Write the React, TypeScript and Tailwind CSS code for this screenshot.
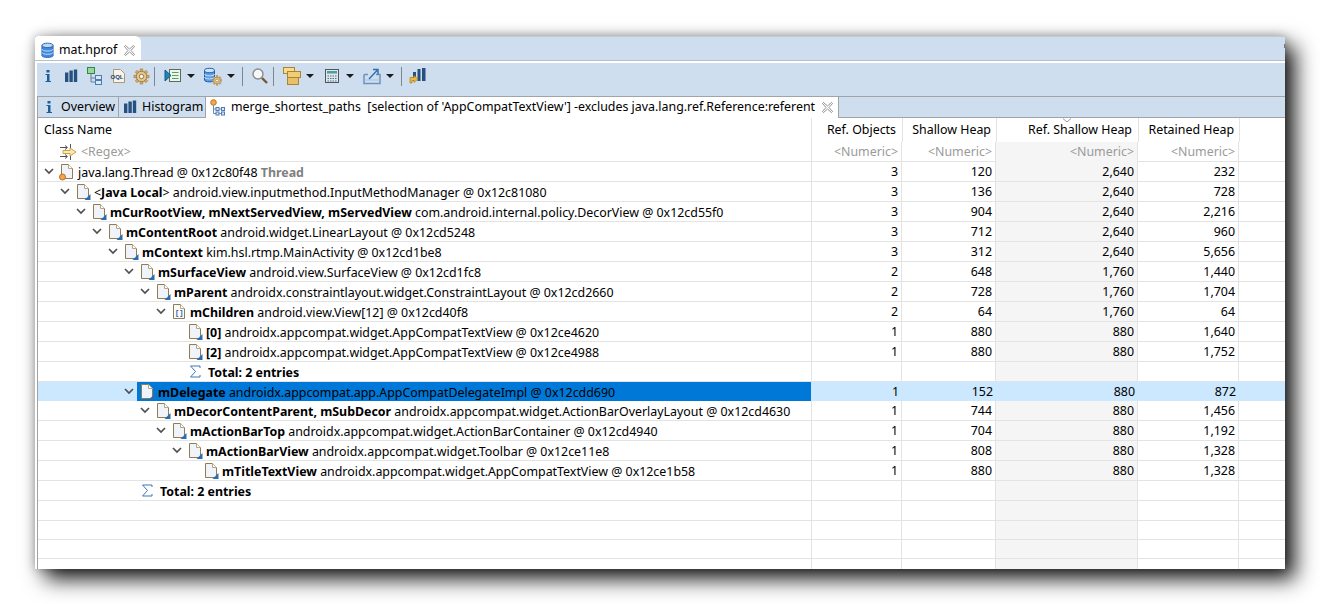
import React from "react";

const F = "font-['Noto_Sans','Liberation_Sans',sans-serif]";

function Chevron() {
  return (
    <svg width="10" height="7" viewBox="0 0 10 7" className="shrink-0">
      <path d="M1 1 L5 5 L9 1" fill="none" stroke="#4f4f4f" strokeWidth="1.7" />
    </svg>
  );
}

function Doc({ kind }: { kind?: "thread" | "array" }) {
  return (
    <svg width="16" height="18" viewBox="0 0 16 18" className="shrink-0">
      <path d="M2.5 1.5 H9.5 L13.5 5.5 V15.5 H2.5 Z" fill={kind === "array" ? "#fbfbfb" : "#f0f4fa"} stroke="#8f7d4f" />
      <path d="M9.5 1.5 V5.5 H13.5" fill="#fff" stroke="#b5a67f" />
      {kind === "thread" ? (
        <circle cx="3.5" cy="14" r="3" fill="#f4a348" stroke="#b8742a" />
      ) : kind === "array" ? (
        <text x="4" y="12" fontSize="7" fill="#2c5f9e" fontFamily="Liberation Mono, monospace" fontWeight="700">[]</text>
      ) : (
        <path d="M15.5 11 V17 H9.5 Z" fill="#2a6db0" />
      )}
    </svg>
  );
}

function Sigma() {
  return (
    <svg width="12" height="13" viewBox="0 0 12 13" className="shrink-0">
      <path d="M11 3 V1 H1.5 L6.5 6.5 L1.5 12 H11 V10" fill="none" stroke="#3a78b8" strokeWidth="1" />
    </svg>
  );
}

function InfoIcon() {
  return (
    <svg width="16" height="16" viewBox="0 0 16 16">
      <rect x="6.5" y="2" width="3" height="2.5" fill="#1f5f99" />
      <path d="M5.5 6 H9.5 V13 H11 V14 H5.5 V13 H7 V7 H5.5 Z" fill="#1f5f99" />
    </svg>
  );
}
function BarsIcon() {
  return (
    <svg width="16" height="16" viewBox="0 0 16 16">
      <rect x="2" y="4.5" width="3.4" height="9.5" fill="#26507f" />
      <rect x="6.4" y="2.5" width="3.4" height="11.5" fill="#26507f" />
      <rect x="10.8" y="1.5" width="3.4" height="12.5" fill="#26507f" />
    </svg>
  );
}
function TreeIcon() {
  return (
    <svg width="18" height="18" viewBox="0 0 18 18">
      <rect x="1.5" y="0.5" width="7" height="6" fill="#9fd49f" stroke="#2f8a4a" />
      <path d="M5 7 V15 H9 M5 11 H9" fill="none" stroke="#6d7f96" />
      <rect x="9.5" y="8.5" width="6" height="4" fill="#dbe8f6" stroke="#4a7db5" />
      <rect x="9.5" y="13.5" width="6" height="4" fill="#dbe8f6" stroke="#4a7db5" />
    </svg>
  );
}
function OqlIcon() {
  return (
    <svg width="16" height="16" viewBox="0 0 16 16">
      <path d="M3.5 1.5 H10.5 L14.5 5.5 V14.5 H3.5 Z" fill="#f7f3e8" stroke="#a99a75" />
      <text x="0.5" y="11" fontSize="6" fontWeight="700" fill="#27466e" fontFamily="Liberation Sans, sans-serif">OQL</text>
    </svg>
  );
}
function Gear({ size = 18, x = 0, y = 0 }: { size?: number; x?: number; y?: number }) {
  const teeth = [0, 45, 90, 135];
  return (
    <svg x={x} y={y} width={size} height={size} viewBox="0 0 18 18">
      {teeth.map((a) => (
        <rect key={a} x="7.5" y="1" width="3" height="16" fill="#d9a75a" stroke="#9a7a45" strokeWidth="0.5" transform={`rotate(${a} 9 9)`} />
      ))}
      <circle cx="9" cy="9" r="5.5" fill="#e8c78a" stroke="#9a7a45" />
      <circle cx="9" cy="9" r="2.3" fill="#fff" stroke="#8a6a3a" />
    </svg>
  );
}
function QueryIcon() {
  return (
    <svg width="18" height="16" viewBox="0 0 18 16">
      <rect x="5.5" y="1.5" width="11" height="12" fill="#eef6ea" stroke="#5c6b5c" />
      <path d="M8 4.5 H14.5 M8 7.5 H14.5 M8 10.5 H14.5" stroke="#58a06a" />
      <path d="M1 2 L7 7.5 L1 13 Z" fill="#1f84b8" stroke="#135a80" />
    </svg>
  );
}
function DbIcon({ w = 16, h = 18 }: { w?: number; h?: number }) {
  return (
    <svg width={w} height={h} viewBox="0 0 14 17">
      <path d="M1 3 V14 C1 16.6 13 16.6 13 14 V3 Z" fill="#3f8ae0" stroke="#1f5fa8" />
      <ellipse cx="7" cy="3" rx="6" ry="2.4" fill="#bcd8f5" stroke="#1f5fa8" />
      <path d="M1 7 C1 9.8 13 9.8 13 7 M1 10.5 C1 13.3 13 13.3 13 10.5" fill="none" stroke="#cfe2f7" />
    </svg>
  );
}
function DbGearIcon() {
  return (
    <svg width="20" height="19" viewBox="0 0 20 19">
      <path d="M1.5 3.5 V13 C1.5 15.5 11.5 15.5 11.5 13 V3.5 Z" fill="#5b9ee6" stroke="#1f5fa8" />
      <ellipse cx="6.5" cy="3.5" rx="5" ry="2.2" fill="#cfe2f7" stroke="#1f5fa8" />
      <path d="M1.5 7 C1.5 9.5 11.5 9.5 11.5 7 M1.5 10 C1.5 12.5 11.5 12.5 11.5 10" fill="none" stroke="#cfe2f7" />
      <Gear size={11} x={8.5} y={8} />
    </svg>
  );
}
function SearchIcon() {
  return (
    <svg width="18" height="18" viewBox="0 0 18 18">
      <circle cx="7" cy="7" r="5" fill="#f5f7fa" stroke="#8c8c8c" strokeWidth="1.4" />
      <path d="M11 11 L16 16" stroke="#7a5636" strokeWidth="2.4" />
    </svg>
  );
}
function GroupIcon() {
  return (
    <svg width="18" height="18" viewBox="0 0 18 18">
      <rect x="0.5" y="0.5" width="11" height="6" fill="#f8dc8f" stroke="#a98534" />
      <rect x="4.5" y="4.5" width="13" height="6" fill="#f2cd76" stroke="#a98534" />
      <rect x="4.5" y="10.5" width="11" height="7" fill="#e8c06a" stroke="#a98534" />
    </svg>
  );
}
function CalcIcon() {
  return (
    <svg width="14" height="14" viewBox="0 0 14 14">
      <rect x="0.5" y="0.5" width="13" height="13" fill="#dfe6ea" stroke="#51565a" />
      <rect x="2" y="2" width="10" height="2.5" fill="#4aa0a0" />
      <path d="M2.5 7 H11.5 M2.5 9.5 H11.5 M2.5 12 H11.5" stroke="#4f6f90" strokeDasharray="1.5 1" />
    </svg>
  );
}
function ExportIcon() {
  return (
    <svg width="18" height="18" viewBox="0 0 18 18">
      <path d="M1 7.5 H5 M13 7.5 H17 V16.5 H1 V7.5" fill="none" stroke="#6a93c4" strokeWidth="1.5" />
      <path d="M1.5 13 H16.5" stroke="#a9c2de" />
      <path d="M6 12 L14 3.5 M10 2.5 H15 V7.5" fill="none" stroke="#2d6eb0" strokeWidth="1.4" />
    </svg>
  );
}
function BarsArrowIcon() {
  return (
    <svg width="18" height="18" viewBox="0 0 18 18">
      <rect x="4" y="5" width="3" height="9" fill="#26507f" />
      <rect x="8.5" y="2" width="3" height="12" fill="#26507f" />
      <rect x="13" y="1" width="3.5" height="13" fill="#26507f" />
      <path d="M1 10.5 H5 V8.5 L9 12 L5 15.5 V13.5 H3 V16 H1 Z" fill="#f0b83c" stroke="#a97c1c" strokeWidth="0.7" />
    </svg>
  );
}
function PathsIcon() {
  return (
    <svg width="16" height="18" viewBox="0 0 16 18">
      <circle cx="3.5" cy="3.5" r="2.8" fill="#f5a94e" stroke="#b8742a" />
      <path d="M3.5 6.5 V14.5 H6 M3.5 10 H6" fill="none" stroke="#6d88a8" />
      <rect x="6" y="8.5" width="3" height="3" fill="#dbe8f6" stroke="#4a7db5" />
      <rect x="11.5" y="8.5" width="3" height="3" fill="#dbe8f6" stroke="#4a7db5" />
      <rect x="6" y="13" width="3" height="3" fill="#dbe8f6" stroke="#4a7db5" />
      <rect x="11.5" y="13" width="3" height="3" fill="#dbe8f6" stroke="#4a7db5" />
      <path d="M9 10 H11.5 M9 14.5 H11.5" stroke="#6d88a8" />
    </svg>
  );
}
function FilterIcon() {
  return (
    <svg width="17" height="16" viewBox="0 0 17 16">
      <path d="M0 3.5 H7 M5 1.5 L7.5 3.5 L5 5.5 M10.5 0 V6" fill="none" stroke="#555" />
      <path d="M0 12.5 H7 M5 10.5 L7.5 12.5 L5 14.5 M10.5 10 V16" fill="none" stroke="#555" />
      <path d="M3 6.5 H10 V4 L16 8 L10 12 V9.5 H3 Z" fill="#f8e9b8" stroke="#c9a23c" />
    </svg>
  );
}
function CloseIcon() {
  return (
    <svg width="11" height="11" viewBox="0 0 11 11">
      <path d="M0.5 1.5 L1.5 0.5 L5.5 4 L9.5 0.5 L10.5 1.5 L7 5.5 L10.5 9.5 L9.5 10.5 L5.5 7 L1.5 10.5 L0.5 9.5 L4 5.5 Z" fill="#fff" stroke="#777" strokeWidth="0.8" />
    </svg>
  );
}
function Caret() {
  return <span className="h-0 w-0 border-x-[4px] border-t-[4px] border-x-transparent border-t-[#1c1c1c]" />;
}
function Sep({ className }: { className: string }) {
  return <span className={`h-[19px] w-px bg-[#7d8794] ${className}`} />;
}

type Row = {
  level: number;
  bold?: string;
  rest?: string;
  suffix?: string;
  leaf?: boolean;
  kind?: "thread" | "array" | "sigma";
  nums: [string, string, string, string];
  selected?: boolean;
  javaLocal?: boolean;
};

const rows: Row[] = [
  { level: 0, rest: "java.lang.Thread @ 0x12c80f48", suffix: "Thread", kind: "thread", nums: ["3", "120", "2,640", "232"] },
  { level: 1, javaLocal: true, rest: "android.view.inputmethod.InputMethodManager @ 0x12c81080", nums: ["3", "136", "2,640", "728"] },
  { level: 2, bold: "mCurRootView, mNextServedView, mServedView", rest: "com.android.internal.policy.DecorView @ 0x12cd55f0", nums: ["3", "904", "2,640", "2,216"] },
  { level: 3, bold: "mContentRoot", rest: "android.widget.LinearLayout @ 0x12cd5248", nums: ["3", "712", "2,640", "960"] },
  { level: 4, bold: "mContext", rest: "kim.hsl.rtmp.MainActivity @ 0x12cd1be8", nums: ["3", "312", "2,640", "5,656"] },
  { level: 5, bold: "mSurfaceView", rest: "android.view.SurfaceView @ 0x12cd1fc8", nums: ["2", "648", "1,760", "1,440"] },
  { level: 6, bold: "mParent", rest: "androidx.constraintlayout.widget.ConstraintLayout @ 0x12cd2660", nums: ["2", "728", "1,760", "1,704"] },
  { level: 7, bold: "mChildren", rest: "android.view.View[12] @ 0x12cd40f8", kind: "array", nums: ["2", "64", "1,760", "64"] },
  { level: 8, leaf: true, bold: "[0]", rest: "androidx.appcompat.widget.AppCompatTextView @ 0x12ce4620", nums: ["1", "880", "880", "1,640"] },
  { level: 8, leaf: true, bold: "[2]", rest: "androidx.appcompat.widget.AppCompatTextView @ 0x12ce4988", nums: ["1", "880", "880", "1,752"] },
  { level: 8, leaf: true, kind: "sigma", bold: "Total: 2 entries", nums: ["", "", "", ""] },
  { level: 5, selected: true, bold: "mDelegate", rest: "androidx.appcompat.app.AppCompatDelegateImpl @ 0x12cdd690", nums: ["1", "152", "880", "872"] },
  { level: 6, bold: "mDecorContentParent, mSubDecor", rest: "androidx.appcompat.widget.ActionBarOverlayLayout @ 0x12cd4630", nums: ["1", "744", "880", "1,456"] },
  { level: 7, bold: "mActionBarTop", rest: "androidx.appcompat.widget.ActionBarContainer @ 0x12cd4940", nums: ["1", "704", "880", "1,192"] },
  { level: 8, bold: "mActionBarView", rest: "androidx.appcompat.widget.Toolbar @ 0x12ce11e8", nums: ["1", "808", "880", "1,328"] },
  { level: 9, leaf: true, bold: "mTitleTextView", rest: "androidx.appcompat.widget.AppCompatTextView @ 0x12ce1b58", nums: ["1", "880", "880", "1,328"] },
  { level: 5, leaf: true, kind: "sigma", bold: "Total: 2 entries", nums: ["", "", "", ""] },
];

const cols = "grid grid-cols-[774px_90px_94px_142px_101px_1fr]";

function TreeRow({ r }: { r: Row }) {
  const chevronLeft = 6 + 16 * r.level;
  const cellBorder = r.selected ? "" : "border-r border-[#e3e3e3]";
  return (
    <div className={`${cols} h-5 ${r.selected ? "bg-[#cce8ff]" : "border-b border-[#e3e3e3]"}`}>
      <div className={`flex overflow-hidden whitespace-nowrap border-r ${r.selected ? "border-transparent" : "border-[#e3e3e3]"}`} style={{ paddingLeft: chevronLeft }}>
        <span className="flex h-[19px] w-[13px] shrink-0 items-center justify-start">{!r.leaf && <Chevron />}</span>
        <span className={`flex h-[19px] min-w-0 flex-1 items-center ${r.selected ? "bg-[#0078d7]" : ""}`}>
          <span className={`flex shrink-0 items-center ${r.kind === "sigma" ? "w-[23px] pl-[4px]" : "w-[21px] pl-[2px]"}`}>
            {r.kind === "sigma" ? <Sigma /> : <Doc kind={r.kind} />}
          </span>
          <span className="pt-[2px] text-[12.4px] leading-[17px] text-black">
            {r.javaLocal ? (
              <>
                &lt;<b>Java Local</b>&gt;{" "}
              </>
            ) : null}
            {r.bold && <b>{r.bold}</b>}
            {r.bold && r.rest ? " " : ""}
            {r.rest}
            {r.suffix ? " " : ""}
            {r.suffix && <b className="text-[#7f7f7f]">{r.suffix}</b>}
          </span>
        </span>
      </div>
      {r.nums.map((n, i) => (
        <div key={i} className={`pr-[3px] text-right text-[12.4px] leading-[19px] text-black ${cellBorder} ${i === 2 && !r.selected ? "bg-[#f5f5f5]" : ""}`}>
          {n}
        </div>
      ))}
      <div />
    </div>
  );
}

function EmptyRow({ h = "h-5", line = true }: { h?: string; line?: boolean }) {
  return (
    <div className={`${cols} ${h} ${line ? "border-b border-[#e3e3e3]" : ""}`}>
      {[0, 1, 2, 3, 4].map((i) => (
        <div key={i} className={`border-r border-[#e3e3e3] ${i === 3 ? "bg-[#f5f5f5]" : ""}`} />
      ))}
      <div />
    </div>
  );
}

export default function App() {
  const head = ["Ref. Objects", "Shallow Heap", "Ref. Shallow Heap", "Retained Heap"];
  return (
    <div className={`h-[604px] w-[1320px] overflow-hidden bg-white pl-[35px] pt-[36px] ${F}`}>
      <div className="flex h-[533px] w-[1250px] flex-col bg-white shadow-[10px_10px_20px_rgba(0,0,0,0.9),0_0_10px_rgba(0,0,0,0.28)]">
        {/* top tab strip */}
        <div className="flex h-[24px] shrink-0 border-t border-[#c4cad2] bg-[#cfdeee]">
          <div className="-mt-px flex h-[24px] w-[106px] items-center rounded-tr-[6px] rounded-tl-[3px] bg-white pl-[6px] pt-[4px] text-[12.4px] text-black">
            <DbIcon w={13} h={17} />
            <span className="ml-[5px]">mat.hprof</span>
            <span className="ml-[7px] flex"><CloseIcon /></span>
          </div>
          <span className="ml-auto mt-[7px] h-[4px] w-px bg-[#6f7780]" />
        </div>
        <div className="h-[3px] shrink-0 border-t border-[#b4bfcd] bg-white" />
        <div className="ml-[2px] flex min-h-0 flex-1 flex-col">
          {/* toolbar */}
          <div className="flex h-[34px] shrink-0 items-center border-b border-[#a0a4a8] bg-[#cfdeee] pb-[7px] pl-[3px]">
            <InfoIcon />
            <span className="ml-[7px] flex"><BarsIcon /></span>
            <span className="ml-[7px] flex"><TreeIcon /></span>
            <span className="ml-[6px] flex"><OqlIcon /></span>
            <span className="ml-[7px] flex"><Gear size={17} /></span>
            <Sep className="ml-[4px]" />
            <span className="ml-[9px] flex"><QueryIcon /></span>
            <span className="ml-[5px] flex"><Caret /></span>
            <span className="ml-[8px] flex"><DbGearIcon /></span>
            <span className="ml-[4px] flex"><Caret /></span>
            <Sep className="ml-[7px]" />
            <span className="ml-[8px] flex"><SearchIcon /></span>
            <Sep className="ml-[4px]" />
            <span className="ml-[9px] flex"><GroupIcon /></span>
            <span className="ml-[5px] flex"><Caret /></span>
            <span className="ml-[11px] flex"><CalcIcon /></span>
            <span className="ml-[7px] flex"><Caret /></span>
            <span className="ml-[9px] flex"><ExportIcon /></span>
            <span className="ml-[5px] flex"><Caret /></span>
            <Sep className="ml-[7px]" />
            <span className="ml-[7px] flex"><BarsArrowIcon /></span>
          </div>
          {/* editor tabs */}
          <div className="flex h-[21px] shrink-0 border-b border-[#a0a4a8] bg-[#cfdeee] text-[12.4px] text-black">
            <div className="flex w-[82px] items-center border-x border-[#a0a4a8] pl-[3px]">
              <InfoIcon />
              <span className="ml-[4px]">Overview</span>
            </div>
            <div className="flex w-[87px] items-center border-r border-[#a0a4a8] pl-[3px]">
              <BarsIcon />
              <span className="ml-[4px]">Histogram</span>
            </div>
            <div className="-mb-px flex w-[633px] items-center whitespace-pre border-r border-[#a0a4a8] bg-white pl-[4px]">
              <PathsIcon />
              <span className="ml-[5px]">merge_shortest_paths  [selection of 'AppCompatTextView'] -excludes java.lang.ref.Reference:referent</span>
              <span className="ml-[7px] flex"><CloseIcon /></span>
            </div>
          </div>
          {/* table */}
          <div className="flex min-h-0 flex-1 flex-col overflow-hidden border-l border-[#a0a0a0] bg-white">
            <div className={`${cols} h-[24px] shrink-0 text-[12.4px] text-black`}>
              <div className="pl-[6px] leading-[23px]">Class Name</div>
              {head.map((h, i) => (
                <div key={h} className={`relative border-l border-[#e3e3e3] text-right leading-[23px] ${i === 0 ? "-ml-px pr-[6px]" : i === 2 ? "pr-[6px]" : "pr-[5px]"}`}>
                  {i === 2 && (
                    <svg width="10" height="5" viewBox="0 0 10 5" className="absolute left-[65px] top-0">
                      <path d="M1 0.5 L5 4 L9 0.5" fill="none" stroke="#9a9a9a" />
                    </svg>
                  )}
                  {h}
                </div>
              ))}
              <div className="border-l border-[#e3e3e3]" />
            </div>
            <div className={`${cols} h-[20px] shrink-0 border-b border-[#e3e3e3] text-[12.4px] text-[#9a9a9a]`}>
              <div className="flex items-center border-r border-[#e3e3e3] pl-[22px]">
                <FilterIcon />
                <span className="ml-[4px]">&lt;Regex&gt;</span>
              </div>
              {[0, 1, 2, 3].map((i) => (
                <div key={i} className={`border-r border-[#e3e3e3] pr-[3px] text-right leading-[20px] ${i === 2 ? "bg-[#f5f5f5]" : ""}`}>
                  &lt;Numeric&gt;
                </div>
              ))}
              <div />
            </div>
            {rows.map((r, i) => (
              <TreeRow key={i} r={r} />
            ))}
            <EmptyRow />
            <EmptyRow />
            <EmptyRow />
            <EmptyRow h="h-[10px]" line={false} />
          </div>
        </div>
      </div>
    </div>
  );
}
